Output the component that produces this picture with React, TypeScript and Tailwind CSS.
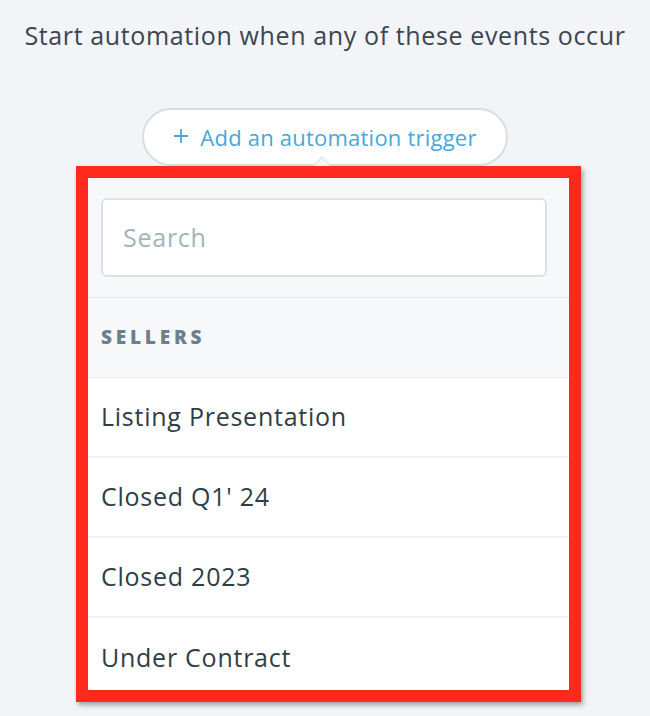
import React from "react";

const rows = ["Listing Presentation", "Closed Q1' 24", "Closed 2023", "Under Contract"];

export default function App() {
  return (
    <div
      className="w-[650px] h-[716px] bg-[#f2f4f7] overflow-hidden flex flex-col"
      style={{ fontFamily: "'Open Sans', Lato, sans-serif" }}
    >
      <div className="pt-[20px] text-center text-[25px] leading-[31px] text-[#3a4652] tracking-[0.025em] whitespace-nowrap">
        Start automation when any of these events occur
      </div>
      <div className="mt-[57px] flex justify-center">
        <div className="w-[366px] h-[58px] rounded-full border-2 border-[#d8dfe3] bg-white flex items-center justify-center gap-[11px] text-[#4aa7da] text-[22px] tracking-[0.01em]">
          <svg width="16" height="16" viewBox="0 0 16 16" className="mb-[2px]">
            <path d="M8 1v14M1 8h14" stroke="#4aa7da" strokeWidth="1.8" />
          </svg>
          <span>Add an automation trigger</span>
        </div>
      </div>
      <div className="relative ml-[76px] w-[505px]">
        <div className="absolute left-[240px] -top-[7px] w-[12px] h-[12px] rotate-45 bg-[#f5f7f9] border-l border-t border-[#d8dfe3]" />
        <div className="relative border-[12px] border-[#fe2a1d] shadow-[2px_3px_5px_rgba(0,0,0,0.35)]">
          <div className="h-[512px] overflow-hidden bg-white">
            <div className="bg-[#f6f8fa] pl-[13px] pt-[20px] h-[120px] border-b border-[#eaeef1]">
              <div className="w-[446px] h-[79px] rounded-[6px] border-2 border-[#dbe2e6] bg-white flex items-center pl-[20px] text-[25px] tracking-[0.03em] text-[#a4b3c0]">
                Search
              </div>
            </div>
            <div className="bg-[#f6f8fa] h-[80px] pl-[13px] flex items-center border-b border-[#eaeef1] text-[19px] font-extrabold tracking-[0.2em] text-[#6c7f8d]">
              SELLERS
            </div>
            {rows.map((r, i) => (
              <div
                key={r}
                className={
                  "h-[80px] pl-[13px] flex items-center text-[25px] tracking-[0.03em] text-[#2f3d48] " +
                  (i < rows.length - 1 ? "border-b-2 border-[#eff2f5]" : "")
                }
              >
                {r}
              </div>
            ))}
          </div>
        </div>
      </div>
    </div>
  );
}
